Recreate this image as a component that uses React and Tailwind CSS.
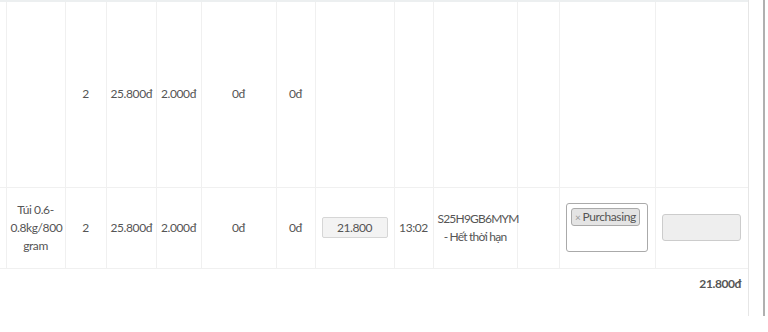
import React from 'react';

const COLS = [6, 59, 41, 50, 45, 75, 39, 79, 39, 84, 42, 96, 93];

const cell = 'border-r border-[#f0f0f0] text-center align-middle px-1';

const App = () => (
  <div className="w-[768px] h-[332px] bg-white overflow-hidden flex text-[12px] tracking-[-0.4px] text-[#555] leading-[18px]" style={{ fontFamily: '"Source Sans Pro", Lato, "Noto Sans", sans-serif' }}>
    <div className="w-[748px] flex-shrink-0 flex flex-col">
      <div className="h-[2px] bg-[#eceff0]" />
      <table className="table-fixed border-collapse w-[748px]">
        <colgroup>
          {COLS.map((w, i) => <col key={i} style={{ width: w }} />)}
        </colgroup>
        <tbody>
          <tr className="h-[185px] border-b border-[#f0f0f0]">
            <td className={cell} />
            <td className={cell} />
            <td className={cell}>2</td>
            <td className={`${cell} px-0`}>25.800đ</td>
            <td className={`${cell} px-0`}>2.000đ</td>
            <td className={cell}>0đ</td>
            <td className={cell}>0đ</td>
            <td className={cell} />
            <td className={cell} />
            <td className={cell} />
            <td className={cell} />
            <td className={cell} />
            <td className={`${cell} border-r-[#e6e6e6]`} />
          </tr>
          <tr className="h-[81px] border-b border-[#f0f0f0]">
            <td className={cell} />
            <td className={cell}>Túi 0.6-0.8kg/800 gram</td>
            <td className={cell}>2</td>
            <td className={`${cell} px-0`}>25.800đ</td>
            <td className={`${cell} px-0`}>2.000đ</td>
            <td className={cell}>0đ</td>
            <td className={cell}>0đ</td>
            <td className={cell}>
              <div className="mx-auto w-[66px] h-[21px] bg-[#f3f3f3] border border-[#d6d6d6] rounded-[2px] flex items-center justify-center">21.800</div>
            </td>
            <td className={cell}>13:02</td>
            <td className={`${cell} px-0 tracking-[-0.8px]`}>S25H9GB6MYM<br />- Hết thời hạn</td>
            <td className={cell} />
            <td className={cell}>
              <div className="mx-auto w-[82px] h-[49px] border border-[#aaa] rounded-[3px] p-[4px] flex items-start">
                <span className="h-[18px] px-[3px] bg-[#e4e4e4] border border-[#aaa] rounded-[3px] flex items-center gap-[2px] text-[#555]">
                  <span className="text-[#999] text-[10px]">×</span>Purchasing
                </span>
              </div>
            </td>
            <td className={`${cell} border-r-[#e6e6e6]`}>
              <div className="mx-auto w-[79px] h-[27px] bg-[#eee] border border-[#ccc] rounded-[3px]" />
            </td>
          </tr>
          <tr>
            <td colSpan={13} className="text-right font-bold pr-[7px] pt-[6px]">21.800đ</td>
          </tr>
        </tbody>
      </table>
    </div>
    <div className="w-[15px] border-l border-[#e6e6e6] h-[316px]" />
    <div className="w-[2px] bg-[#b0b0b0] h-[316px]" />
  </div>
);

export default App;
